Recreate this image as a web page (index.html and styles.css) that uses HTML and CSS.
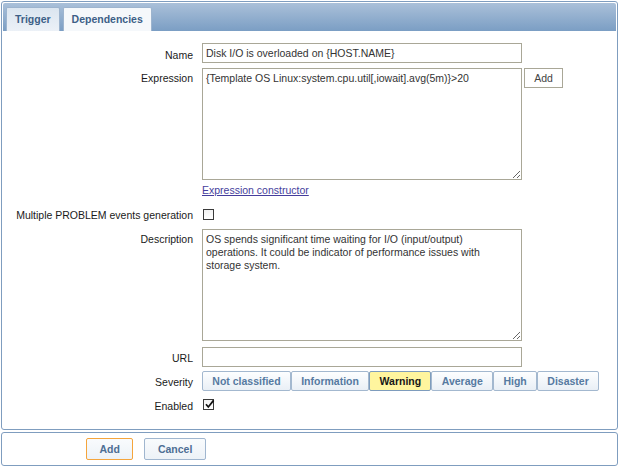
FILE: index.html
```html
<!DOCTYPE html>
<html lang="en">

<head>
    <meta charset="UTF-8">
    <meta name="viewport" content="width=device-width, initial-scale=1.0">
    <title>Trigger</title>
    <link rel="stylesheet" href="styles.css">
</head>

<body>
    <div class="frame">
        <div class="tab-bar">
            <a href="#" class="tab active">Trigger</a>
            <a href="#" class="tab">Dependencies</a>
        </div>

        <div class="form-list">
            <div class="row row-name">
                <label class="label">Name</label>
                <input class="field" type="text" value="Disk I/O is overloaded on {HOST.NAME}">
            </div>

            <div class="row row-area">
                <label class="label">Expression</label>
                <div class="field-line">
                    <textarea class="field area">{Template OS Linux:system.cpu.util[,iowait].avg(5m)}>20</textarea>
                    <button class="plain-btn">Add</button>
                </div>
            </div>

            <div class="row row-link">
                <span></span>
                <a href="#" class="link">Expression constructor</a>
            </div>

            <div class="row row-check">
                <label class="label">Multiple PROBLEM events generation</label>
                <span class="check"></span>
            </div>

            <div class="row row-area row-desc">
                <label class="label">Description</label>
                <textarea class="field area">OS spends significant time waiting for I/O (input/output)
operations. It could be indicator of performance issues with
storage system.</textarea>
            </div>

            <div class="row row-url">
                <label class="label">URL</label>
                <input class="field" type="text" value="">
            </div>

            <div class="row row-severity">
                <label class="label">Severity</label>
                <div class="severity">
                    <span class="sev">Not classified</span>
                    <span class="sev">Information</span>
                    <span class="sev sev-on">Warning</span>
                    <span class="sev">Average</span>
                    <span class="sev">High</span>
                    <span class="sev">Disaster</span>
                </div>
            </div>

            <div class="row row-check row-enabled">
                <label class="label">Enabled</label>
                <span class="check checked">
                    <svg width="11" height="11" viewBox="0 0 11 11">
                        <path d="M2 5.2 L4.3 8 L9.6 1.4" fill="none" stroke="#111" stroke-width="1.7" />
                    </svg>
                </span>
            </div>
        </div>
    </div>

    <div class="frame footer">
        <button class="btn btn-main">Add</button>
        <button class="btn">Cancel</button>
    </div>
</body>

</html>
```

FILE: styles.css
```css
html,
body {
    margin: 0;
    background: #fff;
}

body {
    font-family: "Liberation Sans", Arial, sans-serif;
    font-size: 10.5px;
    color: #1a1a1a;
}

.frame {
    margin: 1px 1px 0 1px;
    border: 1px solid #7f9dbf;
    border-radius: 3px;
    padding: 1px 1px 0 1px;
}

.tab-bar {
    height: 24px;
    padding: 4px 0 0 3px;
    display: flex;
    gap: 3px;
    background: linear-gradient(#aac0d9, #7b9ec4);
    border-radius: 2px 2px 0 0;
}

.tab {
    display: block;
    height: 23px;
    line-height: 23px;
    padding: 0 8px;
    border: 1px solid #9db4ce;
    border-bottom: none;
    border-radius: 2px 2px 0 0;
    background: #f5f8fb;
    color: #3d5f87;
    font-weight: bold;
    text-decoration: none;
}

.tab.active {
    background: linear-gradient(#dbe5f0, #ecf1f7);
}

.form-list {
    display: flex;
    flex-direction: column;
    padding: 12px 0 14px;
}

.row {
    display: grid;
    grid-template-columns: 190px auto;
    column-gap: 9px;
    align-items: start;
    margin-top: 5px;
}

.row-name {
    margin-top: 0;
}

.label {
    text-align: right;
    line-height: 13px;
    padding-top: 5px;
}

.row-name .label {
    padding-top: 6px;
}

.row-area .label {
    padding-top: 4px;
}

.field {
    box-sizing: border-box;
    width: 320px;
    height: 20px;
    margin: 0;
    padding: 0 3px;
    border: 1px solid #a9a797;
    border-radius: 0;
    font-family: "Liberation Sans", Arial, sans-serif;
    font-size: 10.5px;
    color: #333;
    background: #fff;
}

.area {
    height: 112px;
    padding: 3px 3px;
    line-height: 13px;
    resize: both;
    display: block;
}

.field-line {
    display: flex;
    gap: 2px;
    align-items: flex-start;
}

.plain-btn {
    box-sizing: border-box;
    width: 39px;
    height: 20px;
    margin: 0;
    padding: 0;
    border: 1px solid #a9a797;
    background: #fff;
    font-family: "Liberation Sans", Arial, sans-serif;
    font-size: 10.5px;
    color: #444;
}

.row-link {
    margin-top: 4px;
}

.link {
    line-height: 13px;
    color: #453d9c;
}

.row-check {
    height: 20px;
    margin-top: 7px;
}

.check {
    display: block;
    box-sizing: border-box;
    width: 11px;
    height: 11px;
    margin: 5px 0 0 1px;
    border: 1px solid #3a3a3a;
    background: linear-gradient(#f2f2f2, #fff);
    position: relative;
}

.check svg {
    position: absolute;
    left: 0;
    top: -1px;
}

.row-desc {
    margin-top: 5px;
}

.row-url {
    margin-top: 6px;
}

.row-severity {
    margin-top: 4px;
}

.severity {
    display: flex;
}

.sev {
    box-sizing: border-box;
    height: 20px;
    line-height: 18px;
    padding: 0 9.3px;
    border: 1px solid #a3b8cf;
    border-radius: 2px;
    background: linear-gradient(#fdfeff, #e9eff6);
    color: #567aa1;
    font-weight: bold;
    white-space: nowrap;
}

.sev-on {
    background: #fff59e;
    border-color: #7e9cbd;
    color: #161616;
}

.row-enabled {
    margin-top: 4px;
}

.row-enabled .check {
    margin-top: 4px;
}

.footer {
    margin-top: 2px;
    padding: 5px 0 5px 84px;
    display: flex;
    gap: 11px;
}

.btn {
    box-sizing: border-box;
    height: 22px;
    padding: 0 12.5px;
    margin: 0;
    border: 1px solid #a0b6cf;
    border-radius: 2px;
    background: linear-gradient(#f9fbfd, #edf2f7);
    color: #4d6e94;
    font-family: "Liberation Sans", Arial, sans-serif;
    font-size: 10.5px;
    font-weight: bold;
}

.btn-main {
    border-color: #f5a53c;
}
```
